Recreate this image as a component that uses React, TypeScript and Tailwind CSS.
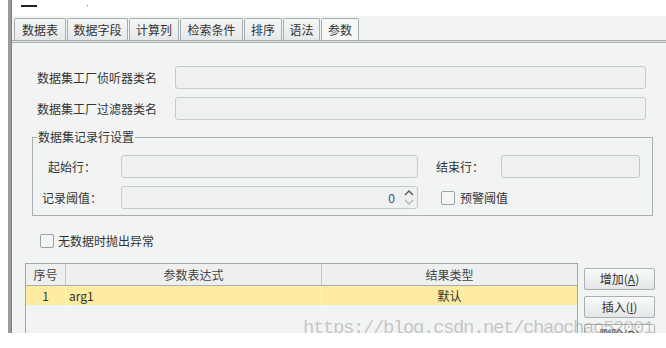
import React from "react";

const tabs = [
  { label: "数据表", w: "w-[52px]" },
  { label: "数据字段", w: "w-[61px]" },
  { label: "计算列", w: "w-[50px]" },
  { label: "检索条件", w: "w-[63px]" },
  { label: "排序", w: "w-[38px]" },
  { label: "语法", w: "w-[37px]" },
  { label: "参数", w: "w-[38px]", active: true },
];

function Field({ className = "" }: { className?: string }) {
  return <div className={`h-[23px] rounded-[3px] border border-[#c4cacd] bg-[#eff1f1] ${className}`} />;
}

function Check() {
  return <div className="w-[14px] h-[14px] rounded-[2px] border border-[#9ba3a7] bg-[#f4f5f5] shrink-0" />;
}

function Btn({ text, key1 }: { text: string; key1: string }) {
  return (
    <div className="h-[22px] w-[71px] shrink-0 rounded-[2px] border border-[#a9b0b3] bg-gradient-to-b from-[#fafafa] to-[#e4e7e8] flex items-center justify-center text-[12px] text-[#333]">
      {text}(<span className="underline">{key1}</span>)
    </div>
  );
}

export default function App() {
  return (
    <div
      className="w-[666px] h-[348px] bg-white overflow-hidden flex flex-col text-[12px] text-[#333]"
      style={{ fontFamily: '"Noto Sans CJK SC", "Noto Sans", sans-serif' }}
    >
      <div className="flex h-[333px]">
        <div className="w-[8px] bg-white" />
        <div className="w-[3px] bg-[#9a9a9a]" />
        <div className="w-[1px] bg-[#3d8fdc]" />
        <div className="flex-1 flex flex-col relative overflow-hidden">
          {/* top strip */}
          <div className="h-[16px] bg-white flex items-start pt-[5px] shrink-0">
            <div className="ml-[9px] w-[16px] h-[2px] bg-[#222]" />
            <div className="ml-[50px] w-[1px] h-[1px] bg-[#e33]" />
          </div>

          {/* tab row */}
          <div className="h-[24px] bg-[#f2f3f3] flex items-end pl-[2px] gap-[1px] shrink-0">
            {tabs.map((t) => (
              <div
                key={t.label}
                className={`${t.w} h-[22px] flex items-center justify-center rounded-t-[2px] border border-b-0 border-[#a7aeb2] leading-none ${
                  t.active ? "bg-[#f6f7f7]" : "bg-gradient-to-b from-[#f5f6f6] to-[#e6e9ea]"
                }`}
              >
                {t.label}
              </div>
            ))}
          </div>
          <div className="h-[1px] bg-[#a3abaf] shrink-0" />
          <div className="h-[1px] bg-[#dfe3e4] shrink-0" />
          <div className="h-[1px] bg-[#a9b1b5] shrink-0" />

          {/* panel */}
          <div className="flex-1 bg-[#f2f3f3] flex flex-col">
            <div className="flex items-center mt-[23px] pl-[25px] pr-[20px]">
              <div className="w-[138px] shrink-0">数据集工厂侦听器类名</div>
              <Field className="flex-1" />
            </div>
            <div className="flex items-center mt-[8px] pl-[25px] pr-[20px]">
              <div className="w-[138px] shrink-0">数据集工厂过滤器类名</div>
              <Field className="flex-1" />
            </div>

            <fieldset className="ml-[20px] mr-[13px] mt-[9px] border border-[#a7aeb2] pb-[6px]">
              <legend className="ml-[4px] px-[1px] leading-[16px] text-[#333]">数据集记录行设置</legend>
              <div className="flex items-center mt-[10px]">
                <div className="w-[78px] text-center shrink-0">起始行：</div>
                <Field className="ml-[10px] w-[297px]" />
                <div className="ml-[18px] w-[65px] shrink-0">结束行：</div>
                <Field className="w-[139px]" />
              </div>
              <div className="flex items-center mt-[8px]">
                <div className="w-[78px] text-center shrink-0">记录阈值：</div>
                <div className="ml-[10px] w-[297px] h-[23px] rounded-[3px] border border-[#c4cacd] bg-[#eff1f1] flex items-center justify-end pr-[2px]">
                  <span className="text-[#3a4a7a]">0</span>
                  <svg width="12" height="17" viewBox="0 0 12 17" className="ml-[8px]">
                    <path d="M2 6 L6 2 L10 6" fill="none" stroke="#555" strokeWidth="1.4" />
                    <path d="M2 11 L6 15 L10 11" fill="none" stroke="#b4b9bc" strokeWidth="1.4" />
                  </svg>
                </div>
                <div className="ml-[23px]">
                  <Check />
                </div>
                <div className="ml-[5px]">预警阈值</div>
              </div>
            </fieldset>

            <div className="flex items-center mt-[16px] ml-[28px]">
              <Check />
              <div className="ml-[4px]">无数据时抛出异常</div>
            </div>

            <div className="flex mt-[13px] ml-[13px] flex-1">
              <div className="w-[553px] h-[120px] border border-[#a0a8ab] bg-[#f2f3f3] flex flex-col shrink-0">
                <div className="flex h-[22px] border-b border-[#a7afb2] bg-[#eef0f0] text-[#444]">
                  <div className="w-[40px] border-r border-[#bfc5c8] flex items-center justify-center">序号</div>
                  <div className="w-[256px] border-r border-[#bfc5c8] flex items-center justify-center">参数表达式</div>
                  <div className="flex-1 flex items-center justify-center">结果类型</div>
                </div>
                <div className="flex h-[19px] bg-[#feeba2] text-[#333]">
                  <div className="w-[40px] border-r border-[#fff4cf] flex items-center justify-center">1</div>
                  <div className="w-[256px] border-r border-[#fff4cf] flex items-center pl-[3px]">arg1</div>
                  <div className="flex-1 flex items-center justify-center">默认</div>
                </div>
              </div>
              <div className="ml-[6px] mt-[5px] flex flex-col gap-[6px]">
                <Btn text="增加" key1="A" />
                <Btn text="插入" key1="I" />
                <Btn text="删除" key1="D" />
              </div>
            </div>
          </div>

          {/* watermark */}
          <div
            className="absolute left-[291px] top-[319px] text-[19px] leading-[19px] tracking-[-1.4px] text-[rgba(140,140,140,0.45)] whitespace-nowrap pointer-events-none"
            style={{ fontFamily: '"Liberation Mono", monospace' }}
          >
            https://blog.csdn.net/chaochao52001
          </div>
        </div>
      </div>
      <div className="h-[15px] bg-white" />
    </div>
  );
}
